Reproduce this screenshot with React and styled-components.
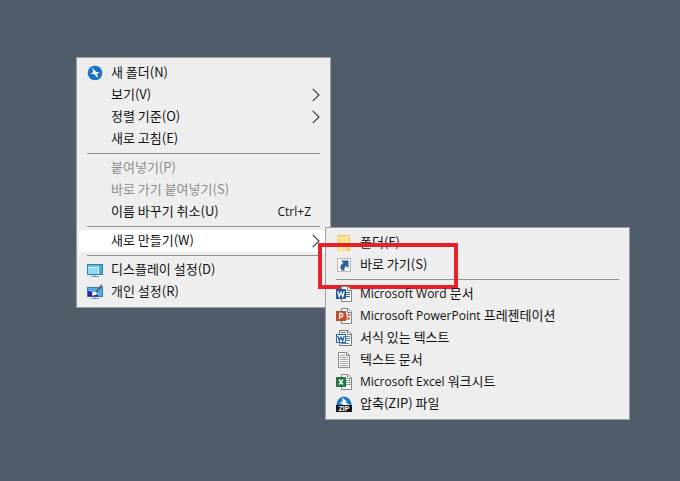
import React from "react";
import styled, { createGlobalStyle } from "styled-components";

const GlobalStyle = createGlobalStyle`
  * { box-sizing: border-box; }
  body {
    margin: 0;
    background: #505c6a;
    font-family: "Noto Sans CJK KR", "Open Sans", sans-serif;
    font-size: 13px;
    line-height: 20px;
    color: #111;
  }
`;

const Desktop = styled.main`
  min-height: 100vh;
  padding: 57px 76px;
  background: #505c6a;
`;

const MenuPanel = styled.ul`
  list-style: none;
  margin: 0;
  padding: 4px 2px;
  width: max-content;
  min-width: ${(p) => p.$minWidth}px;
  background: #eeeeee;
  border: 1px solid #9b9fa3;
`;

const Entry = styled.li`
  position: relative;
`;

const MenuButton = styled.button`
  display: flex;
  align-items: center;
  gap: 8px;
  width: 100%;
  height: 22px;
  margin: 0;
  padding: 0 8px;
  border: 0;
  background: ${(p) => (p.$active ? "#ffffff" : "transparent")};
  color: #111;
  font: inherit;
  text-align: left;
  white-space: nowrap;

  &:disabled {
    color: #8c8c8c;
  }
`;

const IconSlot = styled.span`
  display: flex;
  flex: 0 0 16px;
  height: 16px;
`;

const Label = styled.span`
  flex: 1;
  align-self: flex-start;
`;

const Latin = styled.span`
  font-family: "Open Sans", sans-serif;
  font-size: 12px;
`;

const Shortcut = styled(Latin)`
  margin-right: 9px;
`;

const Separator = styled.li`
  height: 1px;
  margin: 3px 8px;
  background: #929292;
`;

const SubmenuAnchor = styled.div`
  position: absolute;
  top: -3px;
  left: calc(100% - 3px);
  z-index: 1;
`;

const Highlight = styled.div`
  position: absolute;
  top: -11px;
  left: -10px;
  width: 140px;
  height: 46px;
  border: 4px solid #e5222b;
  pointer-events: none;
`;

const Svg = ({ children, ...rest }) => (
  <svg width="16" height="16" viewBox="0 0 16 16" aria-hidden="true" {...rest}>
    {children}
  </svg>
);

const Chevron = () => (
  <svg width="8" height="14" viewBox="0 0 8 14" aria-hidden="true">
    <path d="M0.7 0.8 L7 7 L0.7 13.2" fill="none" stroke="#33333f" strokeWidth="1.1" />
  </svg>
);

const BoltIcon = () => (
  <Svg>
    <circle cx="8" cy="8" r="7.3" fill="#1672c4" />
    <path d="M5 2.8 L9.2 7 L12.8 7.2 L9.9 8.9 L11.4 13.2 L6.8 9.1 L3.2 8.8 L6.2 7.2Z" fill="#fff" />
  </Svg>
);

const DisplayIcon = () => (
  <Svg>
    <rect x="0.5" y="2.5" width="15" height="10" fill="#63bdec" stroke="#2f82b0" />
    <path d="M1 5.5 H11.5 V12" fill="#91d8f8" stroke="#d2f2ff" />
    <path d="M1 6 H11 V12 H1Z" fill="#91d8f8" />
    <path d="M12 3 H15 V12 H12Z" fill="#4fa9dd" />
    <path d="M4 14.5 H12" stroke="#7a9daf" />
    <path d="M7 13 H9 V14 H7Z" fill="#9ac5dc" />
  </Svg>
);

const PersonalizeIcon = () => (
  <Svg>
    <rect x="0.5" y="3.5" width="15" height="9" fill="#50afe5" stroke="#2f82b0" />
    <path d="M1 7 L5 8 V12 H1Z" fill="#4611b5" />
    <path d="M1 11 H11 V12.5 H1Z" fill="#32129b" />
    <path d="M5 11.4 C4.5 9 6 7.5 8 7.4 L10 9.2 C9.5 11 8 11.6 5 11.4Z" fill="#f5f8fb" />
    <path d="M9 8 L15 1.3" stroke="#546879" strokeWidth="2.2" />
    <path d="M4 14.5 H12" stroke="#7a9daf" />
    <path d="M7 13 H9 V14 H7Z" fill="#9ac5dc" />
  </Svg>
);

const FolderIcon = () => (
  <Svg>
    <path d="M2 0.5 H13.5 V11 L14 11.5 V15.5 H2Z" fill="#fae28c" stroke="#e9c966" />
    <path d="M2.5 15 H11 V1" fill="none" stroke="#ffeeb0" />
    <path d="M11.5 11 V15" stroke="#e0bc5d" />
  </Svg>
);

const ShortcutIcon = () => (
  <Svg>
    <rect x="1.5" y="1.5" width="13" height="13" fill="#f7f9fb" stroke="#b5b8bc" />
    <path d="M5 3.5 H12.5 V11 L10.2 9 C8.4 10.2 8 11.4 8.6 13.4 H6 C3.4 10.6 4.2 7.6 7.4 5.9Z" fill="#315f98" />
  </Svg>
);

const Paper = ({ stroke }) => (
  <>
    <path d="M5.5 0.5 H12 L15.5 4 V15.5 H5.5Z" fill="#fff" stroke={stroke} />
    <path d="M11.5 0.5 V4.5 H15.5" fill="none" stroke={stroke} />
  </>
);

const WordIcon = () => (
  <Svg>
    <Paper stroke="#858585" />
    <path d="M9 6.5 H14 M9 8.5 H14 M9 10.5 H14" stroke="#2d69ad" />
    <rect y="3" width="10" height="10" fill="#245aa7" />
    <path d="M1.8 5.4 L3.2 10.5 L5 6.3 L6.8 10.5 L8.2 5.4" fill="none" stroke="#fff" strokeWidth="1.3" />
  </Svg>
);

const PowerPointIcon = () => (
  <Svg>
    <Paper stroke="#858585" />
    <path d="M10 6 A3 3 0 0 0 10 12 H14 V9 H11 V6Z" fill="#e48a6d" />
    <path d="M12 5 A3 3 0 0 1 14.5 8 H12Z" fill="#d8694a" />
    <rect y="3" width="10" height="10" fill="#c84a2b" />
    <path d="M3.6 11 V5.5 H5.2 A1.7 1.7 0 0 1 5.2 8.9 H3.6" fill="none" stroke="#fff" strokeWidth="1.3" />
  </Svg>
);

const RichTextIcon = () => (
  <Svg>
    <path d="M3.5 0.5 H12 L15.5 4 V15.5 H3.5Z" fill="#fff" stroke="#777" />
    <path d="M11.5 0.5 V4.5 H15.5" fill="none" stroke="#777" />
    <path d="M5 2.5 H10 M10 6.5 H14 M10 8.5 H14 M10 10.5 H14 M5 13.5 H13" stroke="#4c83b8" />
    <rect x="0.5" y="4.5" width="9" height="8" fill="#fff" stroke="#286aad" />
    <path d="M1.8 6 L3.3 10.8 L5 7 L6.7 10.8 L8.2 6" fill="none" stroke="#245aa7" strokeWidth="1.3" />
  </Svg>
);

const TextIcon = () => (
  <Svg>
    <path d="M2.5 0.5 H10.5 L13.5 3.5 V15.5 H2.5Z" fill="#fafafa" stroke="#8b8b8b" />
    <path d="M10.5 0.5 V3.5 H13.5" fill="none" stroke="#8b8b8b" />
    <path d="M4 3.5 H9 M4 5.5 H12 M4 7.5 H12 M4 9.5 H12 M4 11.5 H12 M4 13.5 H12" stroke="#aaa" />
  </Svg>
);

const ExcelIcon = () => (
  <Svg>
    <Paper stroke="#858585" />
    <path d="M10 6.5 H11.5 M12.5 6.5 H14.5 M10 8.5 H11.5 M12.5 8.5 H14.5 M10 10.5 H11.5 M12.5 10.5 H14.5" stroke="#38895e" />
    <rect y="3" width="10" height="10" fill="#1f7846" />
    <path d="M3 5.5 L7 10.5 M7 5.5 L3 10.5" stroke="#fff" strokeWidth="1.5" />
  </Svg>
);

const ZipText = styled.text`
  font: 700 7px "Liberation Sans", sans-serif;
`;

const ZipIcon = () => (
  <Svg>
    <path d="M0.5 9 A7.5 8.6 0 0 1 15.5 9Z" fill="#1676c4" />
    <path d="M6.2 1.6 L11 5.6 L9.8 6.4 L13.6 9 H6.6 L6 7.2 L2.8 7.6 L6.6 5.2Z" fill="#fff" />
    <rect y="9" width="16" height="7" fill="#151515" />
    <ZipText x="8" y="15" textAnchor="middle" fill="#fff">ZIP</ZipText>
  </Svg>
);

const createItems = [
  { label: "폴더(F)", icon: FolderIcon },
  { label: "바로 가기(S)", icon: ShortcutIcon, marked: true },
  null,
  { product: "Microsoft Word ", label: "문서", icon: WordIcon },
  { product: "Microsoft PowerPoint ", label: "프레젠테이션", icon: PowerPointIcon },
  { label: "서식 있는 텍스트", icon: RichTextIcon },
  { label: "텍스트 문서", icon: TextIcon },
  { product: "Microsoft Excel ", label: "워크시트", icon: ExcelIcon },
  { label: "압축(ZIP) 파일", icon: ZipIcon },
];

const desktopItems = [
  { label: "새 폴더(N)", icon: BoltIcon },
  { label: "보기(V)", expandable: true },
  { label: "정렬 기준(O)", expandable: true },
  { label: "새로 고침(E)" },
  null,
  { label: "붙여넣기(P)", disabled: true },
  { label: "바로 가기 붙여넣기(S)", disabled: true },
  { label: "이름 바꾸기 취소(U)", shortcut: "Ctrl+Z" },
  null,
  { label: "새로 만들기(W)", expandable: true, children: createItems },
  null,
  { label: "디스플레이 설정(D)", icon: DisplayIcon },
  { label: "개인 설정(R)", icon: PersonalizeIcon },
];

function MenuItem({ item }) {
  const Icon = item.icon;
  return (
    <Entry role="none">
      <MenuButton
        type="button"
        role="menuitem"
        disabled={item.disabled}
        $active={Boolean(item.children)}
        aria-haspopup={item.expandable ? "menu" : undefined}
        aria-expanded={item.expandable ? Boolean(item.children) : undefined}
      >
        <IconSlot>{Icon && <Icon />}</IconSlot>
        <Label>
          {item.product && <Latin>{item.product}</Latin>}
          {item.label}
        </Label>
        {item.shortcut && <Shortcut>{item.shortcut}</Shortcut>}
        {item.expandable && <Chevron />}
      </MenuButton>
      {item.marked && <Highlight />}
      {item.children && (
        <SubmenuAnchor>
          <Menu items={item.children} label={item.label} minWidth={305} />
        </SubmenuAnchor>
      )}
    </Entry>
  );
}

function Menu({ items, label, minWidth }) {
  return (
    <MenuPanel role="menu" aria-label={label} $minWidth={minWidth}>
      {items.map((item, i) =>
        item ? <MenuItem key={item.label} item={item} /> : <Separator key={i} role="separator" />
      )}
    </MenuPanel>
  );
}

export default function App() {
  return (
    <Desktop>
      <GlobalStyle />
      <Menu items={desktopItems} label="바탕 화면" minWidth={255} />
    </Desktop>
  );
}
